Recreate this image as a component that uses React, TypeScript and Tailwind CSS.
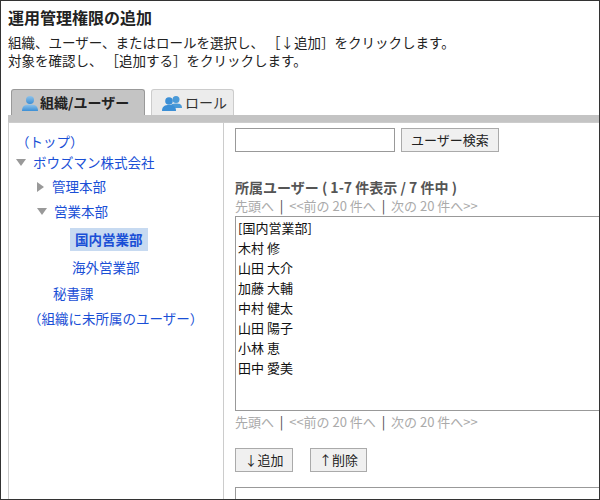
import React from "react";

const PersonIcon = () => (
  <svg width="18" height="16" viewBox="0 0 18 16">
    <defs>
      <linearGradient id="pg" x1="0" y1="0" x2="0" y2="1">
        <stop offset="0" stopColor="#8fc3ea" />
        <stop offset="1" stopColor="#3b8fd6" />
      </linearGradient>
    </defs>
    <circle cx="9" cy="5" r="4" fill="url(#pg)" />
    <path d="M1 16 C1 10 5 9.5 9 9.5 C13 9.5 17 10 17 16 Z" fill="url(#pg)" />
  </svg>
);
const PeopleIcon = () => (
  <svg width="22" height="16" viewBox="0 0 22 16">
    <circle cx="14" cy="4.5" r="3.5" fill="#4a9ad8" />
    <path d="M8 13 C8 9 11 8.5 14 8.5 C17 8.5 20 9 20 13 Z" fill="#4a9ad8" />
    <circle cx="7" cy="6" r="3.8" fill="#3b8fd6" />
    <path d="M0 16 C0 11 3 10 7 10 C11 10 14 11 14 16 Z" fill="#3b8fd6" />
  </svg>
);

const Down = () => <span className="inline-block w-0 h-0 border-l-[5px] border-r-[5px] border-t-[7px] border-l-transparent border-r-transparent border-t-[#999] mr-[7px] mb-[2px]" />;
const Right = () => <span className="inline-block w-0 h-0 border-t-[5px] border-b-[5px] border-l-[7px] border-t-transparent border-b-transparent border-l-[#999] mr-[8px]" />;

const Paging = () => (
  <div className="text-[13px] text-[#aaa] leading-[17px] whitespace-nowrap">
    先頭へ&nbsp; <span className="text-[#444]">|</span>&nbsp; &lt;&lt;前の 20 件へ&nbsp; <span className="text-[#444]">|</span>&nbsp; 次の 20 件へ&gt;&gt;
  </div>
);

export default function App() {
  const users = ["[国内営業部]", "木村 修", "山田 大介", "加藤 大輔", "中村 健太", "山田 陽子", "小林 恵", "田中 愛美"];
  return (
    <div className="w-[600px] h-[500px] overflow-hidden border border-[#333] bg-white text-[#333]" style={{ fontFamily: '"Noto Sans CJK JP", "Liberation Sans", sans-serif' }}>
      <div className="pl-[7px] pt-[6px]">
        <div className="text-[16px] font-bold text-[#222] leading-[20px]">運用管理権限の追加</div>
        <div className="text-[13.5px] leading-[18px] mt-[6px] text-[#222]">組織、ユーザー、またはロールを選択し、 ［↓追加］をクリックします。</div>
        <div className="text-[13.5px] leading-[18px] text-[#222]">対象を確認し、 ［追加する］をクリックします。</div>
      </div>
      <div className="flex items-end gap-[6px] pl-[10px] mt-[20px] h-[26px]">
        <div className="h-[26px] w-[134px] bg-[#c4c4c4] border border-[#999] border-b-0 rounded-t-[3px] flex items-center pl-[9px] gap-[1px] text-[14px] font-bold text-[#222]"><PersonIcon />組織/ユーザー</div>
        <div className="h-[26px] w-[83px] bg-[#ececec] border border-[#ccc] border-b-0 rounded-t-[3px] flex items-center pl-[10px] gap-[1px] text-[14px] text-[#333]"><PeopleIcon />ロール</div>
      </div>
      <div className="ml-[7px] h-[7px] bg-[#c4c4c4]" />
      <div className="ml-[7px] flex border-l border-t border-[#ccc] h-[400px]">
        <div className="w-[215px] border-r border-[#ccc] pl-[7px] pt-[8px] text-[13.5px] text-[#1a4fd6]">
          <div className="h-[21px] leading-[21px]">（トップ）</div>
          <div className="h-[22px] leading-[21px]"><Down />ボウズマン株式会社</div>
          <div className="h-[25px] leading-[25px] pl-[21px]"><Right />管理本部</div>
          <div className="h-[25px] leading-[25px] pl-[21px]"><Down />営業本部</div>
          <div className="h-[30px] flex items-center pl-[54px]"><span className="bg-[#c7daf1] px-[5px] h-[23px] leading-[23px] font-bold">国内営業部</span></div>
          <div className="h-[27px] leading-[27px] pl-[56px]">海外営業部</div>
          <div className="h-[25px] leading-[25px] pl-[37px]">秘書課</div>
          <div className="h-[24px] leading-[24px] pl-[12px]">（組織に未所属のユーザー）</div>
        </div>
        <div className="flex-1 pl-[11px] pt-[5px]">
          <div className="flex items-center gap-[6px]">
            <div className="w-[160px] h-[24px] border border-[#999]" />
            <div className="h-[24px] px-[9px] border border-[#aaa] bg-[#f0f0f0] text-[13px] leading-[22px] text-[#222]">ユーザー検索</div>
          </div>
          <div className="mt-[25px] text-[14px] font-bold text-[#555] leading-[20px]">所属ユーザー ( 1-7 件表示 / 7 件中 )</div>
          <Paging />
          <div className="h-[195px] mt-[2px] border border-[#999] border-r-0 pl-[2px] pt-[1px] text-[13px] leading-[20px] text-[#111]">
            {users.map((u) => <div key={u}>{u}</div>)}
          </div>
          <div className="mt-[2px]"><Paging /></div>
          <div className="flex gap-[17px] mt-[18px]">
            <div className="h-[24px] w-[58px] border border-[#aaa] bg-[#f0f0f0] text-[13px] leading-[22px] text-center text-[#222]">↓追加</div>
            <div className="h-[24px] w-[57px] border border-[#aaa] bg-[#f0f0f0] text-[13px] leading-[22px] text-center text-[#222]">↑削除</div>
          </div>
          <div className="mt-[15px] h-[40px] border border-[#999] border-r-0" />
        </div>
      </div>
    </div>
  );
}
